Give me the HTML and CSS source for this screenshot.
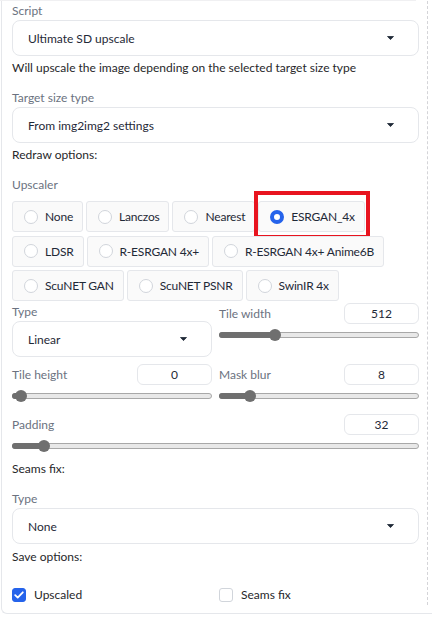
FILE: index.html
```html
<!DOCTYPE html>
<html>
<head>
<meta charset="utf-8">
<link rel="stylesheet" href="styles.css">
</head>
<body>
<div class="topline"></div>
<div class="panel">
  <div class="col">
    <div class="label">Script</div>
    <div class="dropdown"><span>Ultimate SD upscale</span><svg class="caret" width="7" height="4" viewBox="0 0 7 4"><path d="M0.5 0.5h6L3.5 3.6z" fill="#1f2937" stroke="#1f2937" stroke-linejoin="round" stroke-width="0.8"/></svg></div>
    <div class="text hint">Will upscale the image depending on the selected target size type</div>

    <div class="label gap-lg">Target size type</div>
    <div class="dropdown"><span>From img2img2 settings</span><svg class="caret" width="7" height="4" viewBox="0 0 7 4"><path d="M0.5 0.5h6L3.5 3.6z" fill="#1f2937" stroke="#1f2937" stroke-linejoin="round" stroke-width="0.8"/></svg></div>
    <div class="text hint">Redraw options:</div>

    <div class="label gap-lg">Upscaler</div>
    <div class="radios">
      <label class="radio"><span class="dot"></span>None</label>
      <label class="radio"><span class="dot"></span>Lanczos</label>
      <label class="radio"><span class="dot"></span>Nearest</label>
      <label class="radio selected"><span class="dot"></span>ESRGAN_4x<span class="highlight"></span></label>
      <label class="radio"><span class="dot"></span>LDSR</label>
      <label class="radio"><span class="dot"></span>R-ESRGAN 4x+</label>
      <label class="radio"><span class="dot"></span>R-ESRGAN 4x+ Anime6B</label>
      <label class="radio"><span class="dot"></span>ScuNET GAN</label>
      <label class="radio"><span class="dot"></span>ScuNET PSNR</label>
      <label class="radio"><span class="dot"></span>SwinIR 4x</label>
    </div>

    <div class="grid2">
      <div class="field">
        <div class="label">Type</div>
        <div class="dropdown"><span>Linear</span><svg class="caret" width="7" height="4" viewBox="0 0 7 4"><path d="M0.5 0.5h6L3.5 3.6z" fill="#1f2937" stroke="#1f2937" stroke-linejoin="round" stroke-width="0.8"/></svg></div>
      </div>
      <div class="sfield">
        <div class="shead"><span class="label">Tile width</span><span class="num">512</span></div>
        <div class="slider"><div class="track"><div class="fill" style="width:55px"></div><div class="thumb" style="left:55px"></div></div></div>
      </div>
      <div class="sfield">
        <div class="shead"><span class="label">Tile height</span><span class="num">0</span></div>
        <div class="slider"><div class="track"><div class="fill" style="width:8px"></div><div class="thumb" style="left:8px"></div></div></div>
      </div>
      <div class="sfield">
        <div class="shead"><span class="label">Mask blur</span><span class="num">8</span></div>
        <div class="slider"><div class="track"><div class="fill" style="width:30px"></div><div class="thumb" style="left:30px"></div></div></div>
      </div>
    </div>

    <div class="sfield padding">
      <div class="shead"><span class="label">Padding</span><span class="num">32</span></div>
      <div class="slider"><div class="track"><div class="fill" style="width:31px"></div><div class="thumb" style="left:31px"></div></div></div>
    </div>

    <div class="text seams">Seams fix:</div>
    <div class="label gap-lg">Type</div>
    <div class="dropdown"><span>None</span><svg class="caret" width="7" height="4" viewBox="0 0 7 4"><path d="M0.5 0.5h6L3.5 3.6z" fill="#1f2937" stroke="#1f2937" stroke-linejoin="round" stroke-width="0.8"/></svg></div>
    <div class="text save">Save options:</div>

    <div class="checks">
      <label class="check"><span class="box checked"><svg width="10" height="8" viewBox="0 0 10 8"><path d="M1.2 4.2l2.5 2.4L8.8 1.3" fill="none" stroke="#fff" stroke-width="1.8" stroke-linecap="round" stroke-linejoin="round"/></svg></span>Upscaled</label>
      <label class="check"><span class="box"></span>Seams fix</label>
    </div>
  </div>
</div>
</body>
</html>
```

FILE: styles.css
```css
* { box-sizing: border-box; }
html, body { margin: 0; padding: 0; background: #fff; }
body {
  font-family: "Lato", "Liberation Sans", sans-serif;
  font-size: 12px;
  color: #27272a;
  width: 432px;
}
.topline { width: 416px; height: 1px; background: #f0f0f2; }
.panel {
  margin-left: 1px;
  border-left: 1px solid #e5e7eb;
  border-bottom: 1px solid #e5e7eb;
  border-bottom-left-radius: 6px;
  padding: 0 4px 8px 0;
}
.col {
  padding: 1px 8px 1px 10px;
  border-right: 1px dashed #d4d4d8;
}
.label {
  display: block;
  line-height: 18px;
  color: #6b7280;
}
.text { line-height: 18px; color: #27272a; }
.hint { margin-top: 3px; }
.gap-lg { margin-top: 12px; }
.dropdown {
  height: 36px;
  border: 1px solid #e5e7eb;
  border-radius: 8px;
  display: flex;
  align-items: center;
  justify-content: space-between;
  padding: 0 24px 0 15px;
  color: #1f2937;
  background: #fff;
}
.caret { display: block; }

.radios {
  margin-top: 7px;
  display: flex;
  flex-wrap: wrap;
  gap: 3.5px 3px;
}
.radio {
  position: relative;
  height: 31px;
  display: inline-flex;
  align-items: center;
  gap: 7px;
  padding: 0 9px 0 11px;
  border: 1px solid #e5e7eb;
  border-radius: 3px;
  background: #fafafa;
  color: #1f2937;
  white-space: nowrap;
  letter-spacing: -0.2px;
}
.dot {
  width: 14px;
  height: 14px;
  border-radius: 50%;
  border: 1px solid #d1d5db;
  background: #fff;
  flex: none;
}
.selected .dot {
  border: 4px solid #2563eb;
  background: #fff;
}
.highlight {
  position: absolute;
  top: -11px;
  left: -5px;
  right: -6px;
  bottom: -8px;
  border: 4px solid #e8141f;
  pointer-events: none;
}

.grid2 {
  margin-top: 2px;
  display: grid;
  grid-template-columns: 200px 200px;
  column-gap: 7px;
  row-gap: 7px;
}
.shead {
  height: 21px;
  display: flex;
  align-items: center;
  justify-content: space-between;
}
.num {
  width: 75px;
  height: 21px;
  border: 1px solid #e5e7eb;
  border-radius: 6px;
  display: flex;
  align-items: center;
  justify-content: center;
  color: #1f2937;
}
.slider {
  margin-top: 5px;
  height: 12px;
  display: flex;
  align-items: center;
}
.track {
  position: relative;
  flex: 1;
  height: 6px;
  border: 1px solid #a8a8a8;
  border-radius: 3px;
  background: #e8e8e8;
}
.fill {
  margin: -1px 0 0 -1px;
  height: 6px;
  background: #6f6f6f;
  border-radius: 3px 0 0 3px;
}
.thumb {
  position: absolute;
  top: 50%;
  width: 12px;
  height: 12px;
  margin: -6px 0 0 -6px;
  border-radius: 50%;
  background: #6f6f6f;
}
.padding { margin-top: 12px; }
.seams { margin-top: 8px; }
.save { margin-top: 4px; }
.checks {
  margin-top: 20px;
  display: grid;
  grid-template-columns: 200px 200px;
  column-gap: 7px;
}
.check {
  display: flex;
  align-items: center;
  gap: 8px;
  line-height: 18px;
  color: #27272a;
}
.box {
  width: 14px;
  height: 14px;
  border-radius: 3px;
  border: 1px solid #d1d5db;
  background: #fff;
  display: flex;
  align-items: center;
  justify-content: center;
}
.box.checked { background: #2563eb; border-color: #2563eb; }
.box svg { display: block; }
```
